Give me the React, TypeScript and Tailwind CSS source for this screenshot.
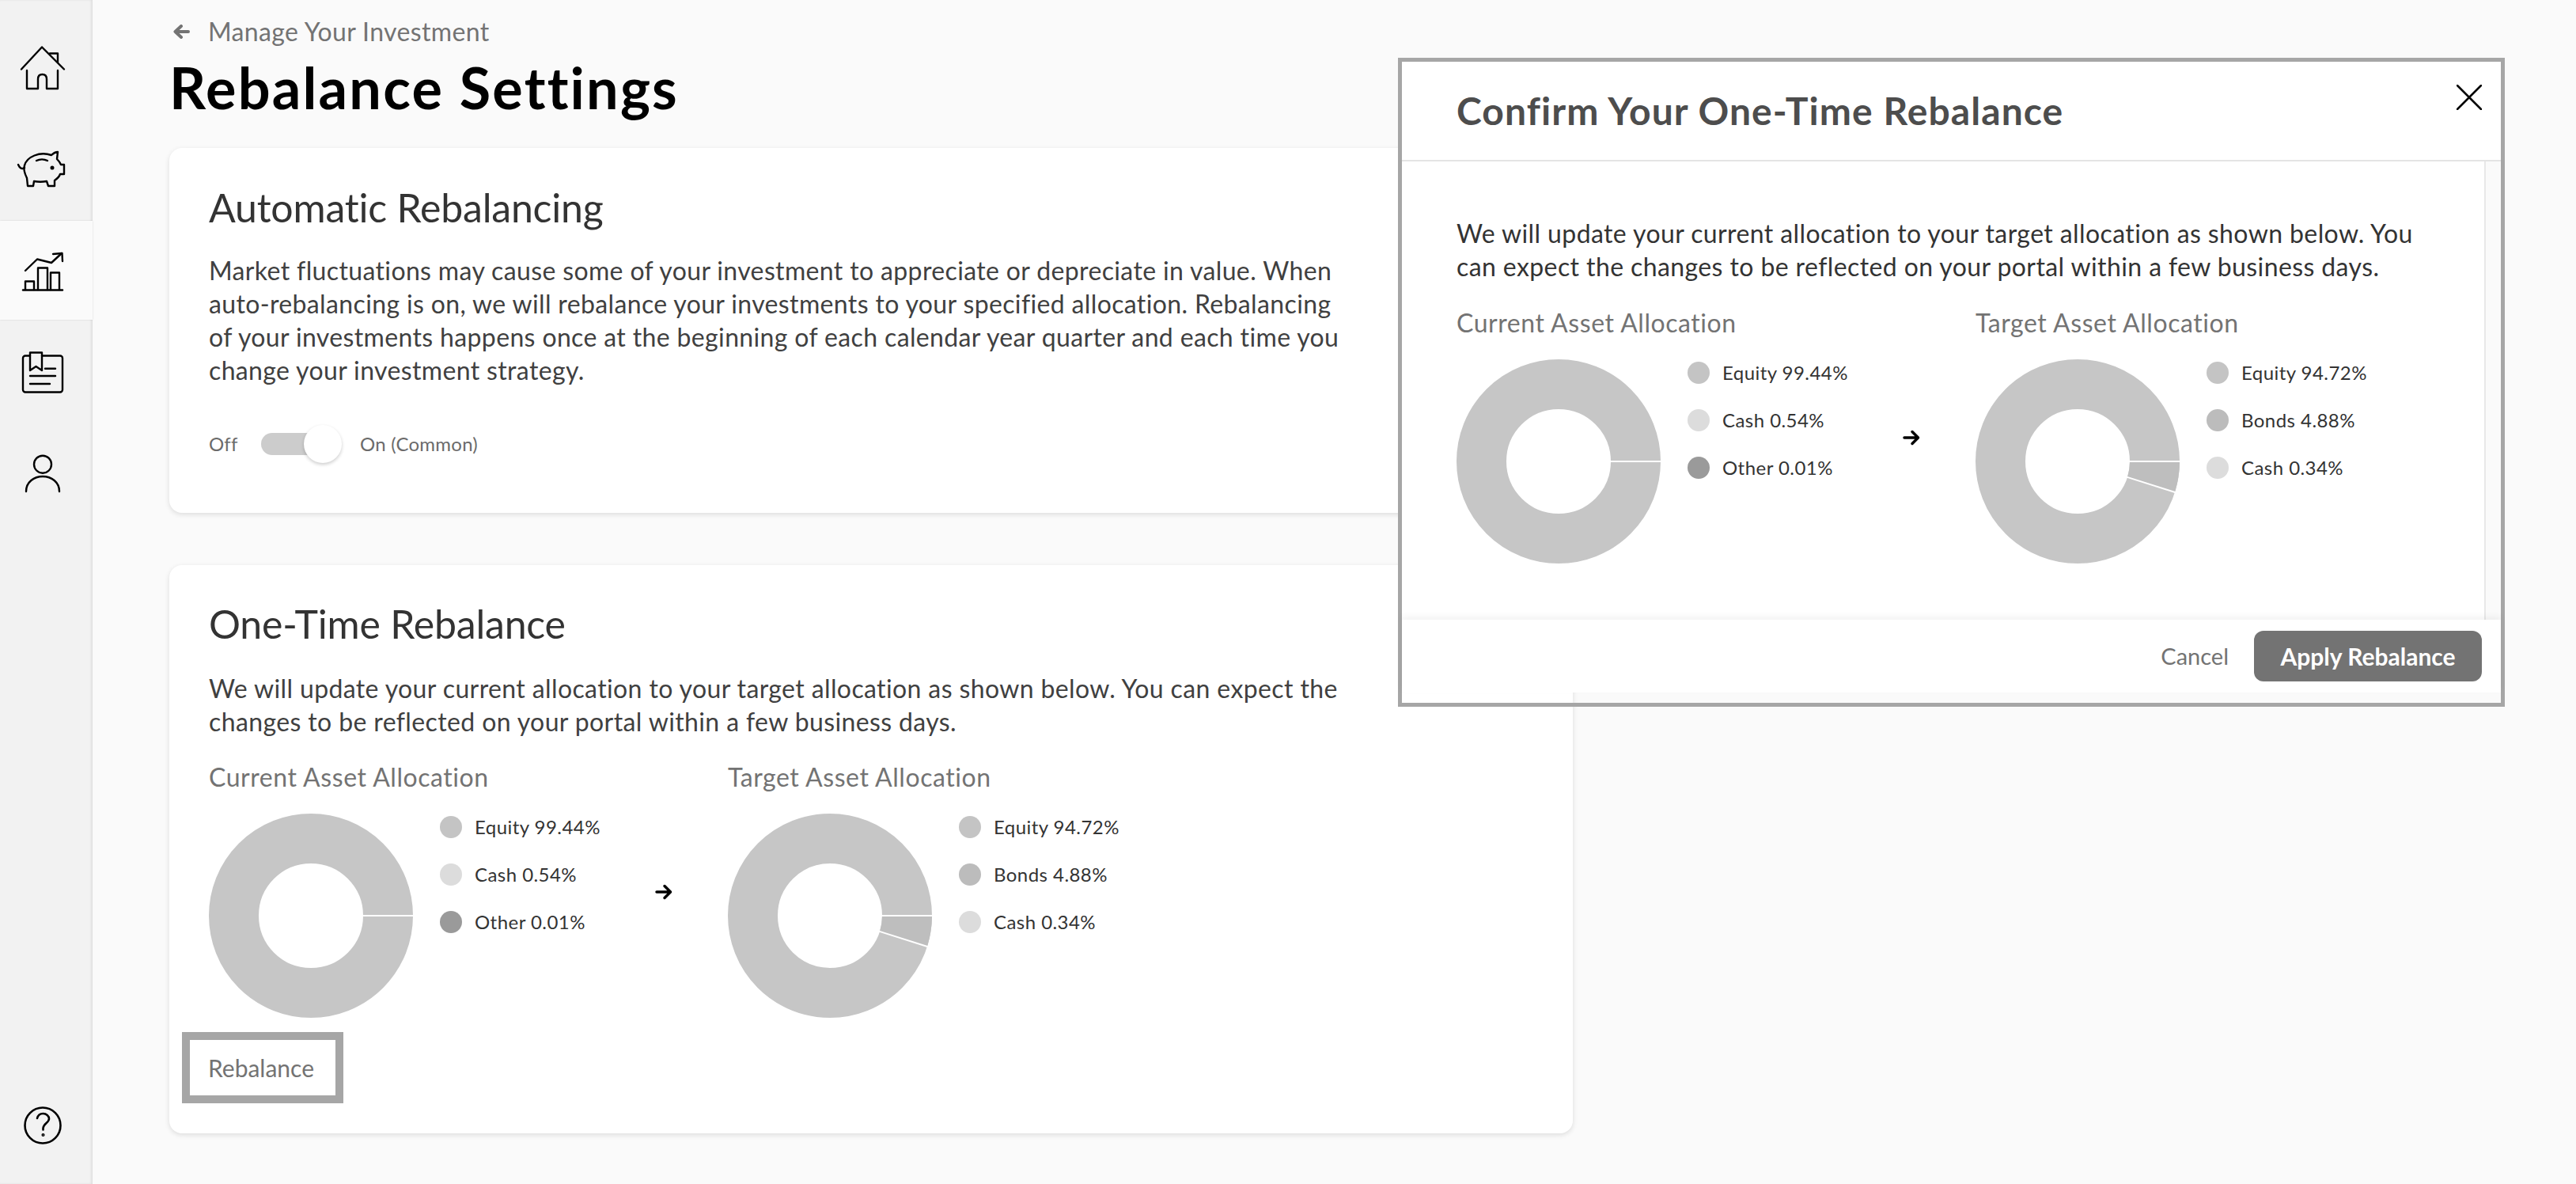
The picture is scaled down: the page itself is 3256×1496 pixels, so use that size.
import React from "react";

const FONT = "font-['Lato','Open_Sans',sans-serif]";

const currentSlices = [
  { label: "Equity 99.44%", dot: "bg-[#c4c4c4]" },
  { label: "Cash 0.54%", dot: "bg-[#dcdcdc]" },
  { label: "Other 0.01%", dot: "bg-[#9a9a9a]" },
];

const targetSlices = [
  { label: "Equity 94.72%", dot: "bg-[#c4c4c4]" },
  { label: "Bonds 4.88%", dot: "bg-[#bcbcbc]" },
  { label: "Cash 0.34%", dot: "bg-[#dcdcdc]" },
];

function HomeIcon() {
  return (
    <svg width="60" height="60" viewBox="0 0 60 60" fill="none" stroke="#000" strokeWidth="2.4" strokeLinejoin="round" strokeLinecap="round" className="overflow-visible">
      <path d="M3 31.5 29 3.5 57 31.5" />
      <path d="M39 11.5h10v11" />
      <path d="M10 33v23h14V44c0-4 2-6 5.500-6s5.500 2 5.500 6v12h14V33" />
    </svg>
  );
}

function PiggyIcon() {
  return (
    <svg width="60" height="60" viewBox="0 0 60 60" fill="none" stroke="#000" strokeWidth="2.4" strokeLinejoin="round" strokeLinecap="round" className="overflow-visible">
      <path d="M-1 24c2 5 5 6 8 4" />
      <path d="M7 25C10 14 26 7 41 12c2-2 5-4 8-4l-1 9c2 2 4 4 5 7h4v12h-5c-1 3-4 6-7 8v7h-8l-2-6c-5 1-11 1-16 0l-1 6h-7l-1-10C8 37 5 31 7 25Z" />
      <path d="M22 19c4-2 10-2 14 0" />
      <circle cx="42" cy="28" r="1.300" fill="#000" />
    </svg>
  );
}

function ChartIcon() {
  return (
    <svg width="60" height="60" viewBox="0 0 60 60" fill="none" stroke="#000" strokeWidth="2.400" strokeLinejoin="round" strokeLinecap="round" className="overflow-visible">
      <path d="M5 54.500h50" />
      <path d="M8 54V43.500h11V54" />
      <path d="M24 54V26.500h12V54" />
      <path d="M40 54V32.500h11V54" />
      <path d="M8 30 23 15.500 41 20 54 8" />
      <path d="M43 9 54.500 8 55 18" />
    </svg>
  );
}

function NewsIcon() {
  return (
    <svg width="60" height="60" viewBox="0 0 60 60" fill="none" stroke="#000" strokeWidth="2.400" strokeLinejoin="round" strokeLinecap="round" className="overflow-visible">
      <path d="M14 9.500H8a3 3 0 0 0-3 3v40a3 3 0 0 0 3 3h44a3 3 0 0 0 3-3v-40a3 3 0 0 0-3-3H29" />
      <path d="M14 5.500h15V28l-7.500-5L14 28Z" />
      <path d="M33 25.700h13M14 35h32M14 45h25" />
    </svg>
  );
}

function UserIcon() {
  return (
    <svg width="60" height="60" viewBox="0 0 60 60" fill="none" stroke="#000" strokeWidth="2.400" strokeLinecap="round" className="overflow-visible">
      <circle cx="30" cy="18.700" r="11" />
      <path d="M9 53c0-12 10-19 21-19s21 7 21 19" />
    </svg>
  );
}

function HelpIcon() {
  return (
    <svg width="60" height="60" viewBox="0 0 60 60" fill="none" stroke="#000" strokeWidth="2.600" strokeLinecap="round" className="overflow-visible">
      <circle cx="30" cy="30" r="22.500" />
      <path d="M23 21c1-4 4-6 7.500-6 4 0 7.500 3 7.500 6.500 0 5-7 6-7.500 12v2" />
      <circle cx="30.500" cy="42" r="1.300" strokeWidth="1.500" />
    </svg>
  );
}

// second slice is only there on the target donut
function Donut({ cuts }: { cuts: number[] }) {
  return (
    <svg width="258" height="258" viewBox="0 0 258 258" className="shrink-0">
      <circle cx="129" cy="129" r="97.500" fill="none" stroke="#c6c6c6" strokeWidth="63" />
      {cuts.length > 1 && (
        <circle cx="129" cy="129" r="97.500" fill="none" stroke="#bebebe" strokeWidth="63" strokeDasharray="29.900 612.600" />
      )}
      {cuts.map((deg) => {
        const rad = (deg * Math.PI) / 180;
        return (
          <line
            key={deg}
            x1={129 + 65 * Math.cos(rad)}
            y1={129 + 65 * Math.sin(rad)}
            x2={129 + 130 * Math.cos(rad)}
            y2={129 + 130 * Math.sin(rad)}
            stroke="#fff"
            strokeWidth="2"
          />
        );
      })}
    </svg>
  );
}

function Allocation({ title, cuts, rows }: { title: string; cuts: number[]; rows: typeof currentSlices }) {
  return (
    <div className="w-[556px] shrink-0">
      <div className="text-[32px] leading-[44px] tracking-[0.55px] text-[#737373]">{title}</div>
      <div className="mt-6 flex gap-[34px]">
        <Donut cuts={cuts} />
        <div className="flex flex-col gap-8 pt-[3px]">
          {rows.map((row) => (
            <div key={row.label} className="flex h-7 items-center gap-4">
              <span className={`h-7 w-7 rounded-full ${row.dot}`} />
              <span className="whitespace-nowrap text-[24px] tracking-[0.45px] text-[#333333]">{row.label}</span>
            </div>
          ))}
        </div>
      </div>
    </div>
  );
}

function AllocationRow() {
  return (
    <div className="flex">
      <Allocation title="Current Asset Allocation" cuts={[0]} rows={currentSlices} />
      <div className="w-[100px] shrink-0 pl-2 pt-[157px]">
        <svg width="22" height="20" viewBox="0 0 22 20" fill="none" stroke="#000" strokeWidth="3.500" strokeLinecap="round" strokeLinejoin="round">
          <path d="M2 10h17M12 2.500 19.500 10 12 17.500" />
        </svg>
      </div>
      <Allocation title="Target Asset Allocation" cuts={[0, 17.6]} rows={targetSlices} />
    </div>
  );
}

function ConfirmModal() {
  return (
    <div className="absolute left-[1767px] top-[73px] flex h-[820px] w-[1399px] flex-col border-[5px] border-[#a6a6a6]">
      <div className="flex h-[126px] shrink-0 justify-between border-b-2 border-[#e4e4e4] bg-white">
        <h2 className="self-center pl-[69px] text-[48px] font-bold tracking-[1.07px] text-[#4d4d4d]">Confirm Your One-Time Rebalance</h2>
        <svg width="32" height="32" viewBox="0 0 32 32" fill="none" stroke="#000" strokeWidth="2.500" strokeLinecap="round" className="mr-6 mt-[29px]">
          <path d="M1 1l30 30M31 1 1 31" />
        </svg>
      </div>
      <div className="flex min-h-0 flex-1">
        <div className="flex-1 bg-white pl-[69px] pt-[70px]">
          <p className="text-[32px] leading-[42px] tracking-[0.4px] text-[#333333]">
            We will update your current allocation to your target allocation as shown below. You
            <br />
            can expect the changes to be reflected on your portal within a few business days.
          </p>
          <div className="mt-7">
            <AllocationRow />
          </div>
        </div>
        <div className="w-[21px] shrink-0 border-l-2 border-[#e8e8e8] bg-[#fafafa]" />
      </div>
      <div className="relative flex h-[92px] shrink-0 items-center justify-end gap-8 bg-white pr-6 shadow-[0_-4px_8px_rgba(0,0,0,0.05)]">
        <span className="text-[29px] text-[#737373]">Cancel</span>
        <button className="flex h-16 w-[288px] items-center justify-center rounded-xl bg-[#737373] text-[30px] font-bold text-white">
          Apply Rebalance
        </button>
      </div>
      {/* the page shows through under the footer */}
      <div className="h-[13px] shrink-0" />
    </div>
  );
}

export default function App() {
  const navIcons = [<HomeIcon />, <PiggyIcon />, <ChartIcon />, <NewsIcon />, <UserIcon />];

  return (
    <div className={`relative flex h-[1496px] w-[3256px] overflow-hidden bg-[#fafafa] ${FONT}`}>
      {/* Sidebar */}
      <nav className="flex h-full w-[117px] shrink-0 flex-col gap-[3px] bg-[#f2f2f2] pt-[23px] shadow-[inset_-2px_0_3px_rgba(0,0,0,0.08)]">
        {navIcons.map((icon, idx) => (
          <div
            key={idx}
            className={`flex h-[125px] items-center pl-6 ${idx === 2 ? "bg-[#fafafa] shadow-[0_0_2px_rgba(0,0,0,0.15)]" : ""}`}
          >
            {icon}
          </div>
        ))}
        <div className="mb-[44px] mt-auto pl-6">
          <HelpIcon />
        </div>
      </nav>

      <main className="w-[1871px] shrink-0 pl-[97px]">
        <div className="flex h-[60px] items-center gap-[23px] pl-[5px] pt-5 text-[32px] tracking-[0.36px] text-[#737373]">
          <svg width="21" height="18" viewBox="0 0 21 18" fill="none" stroke="#737373" strokeWidth="4" strokeLinecap="round" strokeLinejoin="round">
            <path d="M19 9H3M10 2 2.500 9l7.500 7" />
          </svg>
          <span className="whitespace-nowrap">Manage Your Investment</span>
        </div>
        <h1 className="mt-[10px] text-[72px] font-bold leading-[80px] tracking-[2.2px] text-black">Rebalance Settings</h1>

        {/* Automatic */}
        <section className="mt-[37px] h-[461px] rounded-2xl bg-white pl-[50px] pt-[45px] shadow-[0_2px_6px_rgba(0,0,0,0.12)]">
          <h2 className="text-[50px] leading-[60px] tracking-[-0.2px] text-[#333333]">Automatic Rebalancing</h2>
          <p className="mt-[29px] text-[32px] leading-[42px] tracking-[0.36px] text-[#404040]">
            Market fluctuations may cause some of your investment to appreciate or depreciate in value. When
            <br />
            auto-rebalancing is on, we will rebalance your investments to your specified allocation. Rebalancing
            <br />
            of your investments happens once at the beginning of each calendar year quarter and each time you
            <br />
            change your investment strategy.
          </p>
          <div className="mt-12 flex h-12 items-center text-[24px] tracking-[0.25px] text-[#6b6b6b]">
            <span className="w-[66px]">Off</span>
            <div className="relative h-7 w-[90px] rounded-full bg-[#cccccc]">
              <span className="absolute -top-[10px] left-[54px] h-12 w-12 rounded-full bg-white shadow-[0_2px_4px_rgba(0,0,0,0.2)]" />
            </div>
            <span className="ml-[35px]">On (Common)</span>
          </div>
        </section>

        {/* One-time */}
        <section className="mt-[66px] h-[718px] rounded-2xl bg-white pl-[50px] pt-[44px] shadow-[0_2px_6px_rgba(0,0,0,0.12)]">
          <h2 className="text-[50px] leading-[60px] tracking-[-0.2px] text-[#333333]">One-Time Rebalance</h2>
          <p className="mt-[31px] text-[32px] leading-[42px] tracking-[0.38px] text-[#404040]">
            We will update your current allocation to your target allocation as shown below. You can expect the
            <br />
            changes to be reflected on your portal within a few business days.
          </p>
          <div className="mt-[27px]">
            <AllocationRow />
          </div>
          <button className="-ml-[34px] mt-[18px] block h-[90px] w-[204px] border-[10px] border-[#a6a6a6] pl-[23px] text-left text-[30px] text-[#737373]">
            Rebalance
          </button>
        </section>
      </main>

      <ConfirmModal />
    </div>
  );
}
